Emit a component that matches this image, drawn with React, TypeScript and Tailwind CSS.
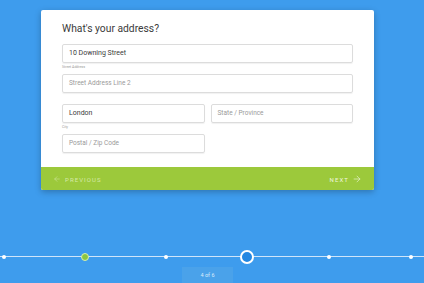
import { ArrowLeft, ArrowRight } from 'lucide-react'

function Field({ value, placeholder, label }: { value?: string; placeholder?: string; label?: string }) {
  return (
    <div className="flex flex-col">
      <div className="h-[19px] border border-[#dcdcdc] rounded-[2px] shadow-[0_1px_1px_rgba(0,0,0,0.06)] flex items-center px-[6px]">
        {value ? (
          <span className="text-[7px] text-[#3a3a3a]">{value}</span>
        ) : (
          <span className="text-[6.5px] text-[#9a9a9a]">{placeholder}</span>
        )}
      </div>
      <div className="h-[11px] pt-[2px] text-[3.5px] leading-[5px] text-[#9a9a9a]">{label}</div>
    </div>
  )
}

export default function App() {
  const dots = [4, 85, 166, 247, 329, 411]
  return (
    <div className="w-[424px] h-[283px] bg-[#3e9ced] overflow-hidden flex flex-col font-['Roboto',sans-serif]">
      {/* Card */}
      <div className="ml-[41px] mt-[10px] w-[333px] bg-white rounded-[2px] shadow-[0_2px_6px_rgba(0,0,0,0.25)] overflow-hidden">
        <div className="px-[21px] pt-[12px] pb-[3px]">
          <h1 className="text-[10.3px] leading-[14px] text-[#3a3a3a] mb-[8px]">What's your address?</h1>
          <Field value="10 Downing Street" label="Street Address" />
          <Field placeholder="Street Address Line 2" />
          <div className="grid grid-cols-2 gap-x-[6px]">
            <Field value="London" label="City" />
            <Field placeholder="State / Province" />
            <Field placeholder="Postal / Zip Code" />
          </div>
        </div>
        <div className="h-[24px] bg-[#9cc93b] flex items-center justify-between px-[12px]">
          <div className="flex items-center gap-[4px] text-[#d6e9a8]">
            <ArrowLeft size={8} strokeWidth={1.5} />
            <span className="text-[6px] tracking-[1.1px]">PREVIOUS</span>
          </div>
          <div className="flex items-center gap-[3px] text-[#eef6dc]">
            <span className="text-[6px] tracking-[1.1px]">NEXT</span>
            <ArrowRight size={10} strokeWidth={1.5} />
          </div>
        </div>
      </div>

      {/* Progress track */}
      <div className="relative mt-[66px] h-[1px] bg-[#cfe5fa]">
        {dots.map((x, i) => {
          if (i === 1)
            return (
              <div
                key={i}
                className="absolute w-[8px] h-[8px] rounded-full bg-[#8cc63f] border border-[#d8f0b0]"
                style={{ left: x - 4, top: -3.5 }}
              />
            )
          if (i === 3)
            return (
              <div
                key={i}
                className="absolute w-[14px] h-[14px] rounded-full bg-[#2387e2] border-[2px] border-white"
                style={{ left: x - 7, top: -6.5 }}
              />
            )
          return (
            <div
              key={i}
              className="absolute w-[4px] h-[4px] rounded-full bg-white"
              style={{ left: x - 2, top: -1.5 }}
            />
          )
        })}
      </div>
      <div className="ml-[182px] mt-[10px] w-[51px] h-[16px] bg-[#4aa2ea] flex items-center justify-center">
        <span className="text-[5.5px] text-[#d8ebfb]">4 of 6</span>
      </div>
    </div>
  )
}
